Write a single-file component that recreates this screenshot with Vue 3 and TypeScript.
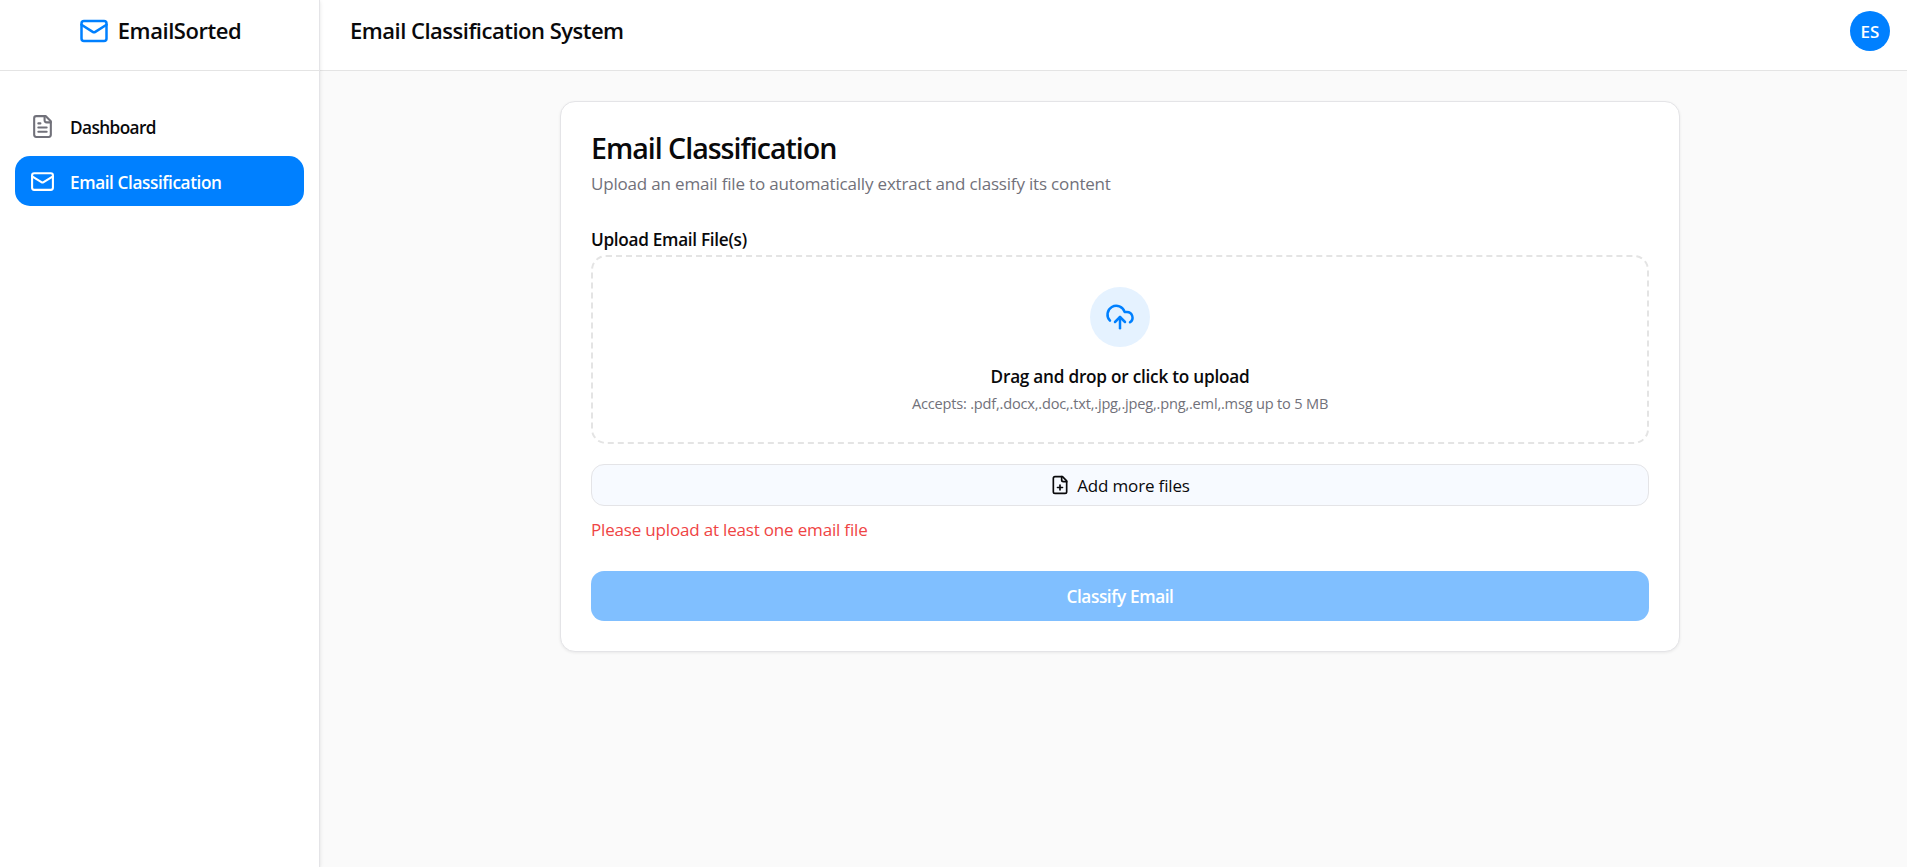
<script setup lang="ts">
interface NavItem {
  label: string
  icon: 'file' | 'mail'
  active: boolean
}

const navItems: NavItem[] = [
  { label: 'Dashboard', icon: 'file', active: false },
  { label: 'Email Classification', icon: 'mail', active: true }
]

const extensions = ['.pdf', '.docx', '.doc', '.txt', '.jpg', '.jpeg', '.png', '.eml', '.msg']
const maxSizeMb = 5
</script>

<template>
  <div class="app">
    <aside class="sidebar">
      <div class="brand">
        <svg class="icon brand-icon" viewBox="0 0 24 24">
          <rect width="20" height="16" x="2" y="4" rx="2" />
          <path d="m22 7-8.97 5.7a1.94 1.94 0 0 1-2.06 0L2 7" />
        </svg>
        <span class="brand-name">EmailSorted</span>
      </div>
      <nav class="nav">
        <a v-for="item in navItems" :key="item.label" class="nav-item" :class="[item.icon, { active: item.active }]">
          <svg v-if="item.icon === 'file'" class="icon nav-icon" viewBox="0 0 24 24">
            <path d="M15 2H6a2 2 0 0 0-2 2v16a2 2 0 0 0 2 2h12a2 2 0 0 0 2-2V7Z" />
            <path d="M14 2v4a2 2 0 0 0 2 2h4" />
            <path d="M10 9H8" />
            <path d="M16 13H8" />
            <path d="M16 17H8" />
          </svg>
          <svg v-else class="icon nav-icon" viewBox="0 0 24 24">
            <rect width="20" height="16" x="2" y="4" rx="2" />
            <path d="m22 7-8.97 5.7a1.94 1.94 0 0 1-2.06 0L2 7" />
          </svg>
          <span>{{ item.label }}</span>
        </a>
      </nav>
    </aside>

    <div class="main">
      <header class="header">
        <h1 class="header-title">Email Classification System</h1>
        <div class="avatar">ES</div>
      </header>

      <main class="content">
        <section class="card">
          <h2 class="card-title">Email Classification</h2>
          <p class="card-desc">Upload an email file to automatically extract and classify its content</p>

          <label class="field-label">Upload Email File(s)</label>
          <div class="dropzone">
            <div class="drop-icon">
              <svg class="icon" viewBox="0 0 24 24">
                <path d="M4 14.899A7 7 0 1 1 15.71 8h1.79a4.5 4.5 0 0 1 2.5 8.242" />
                <path d="M12 12v9" />
                <path d="m16 16-4-4-4 4" />
              </svg>
            </div>
            <p class="drop-title">Drag and drop or click to upload</p>
            <p class="drop-hint">Accepts: {{ extensions.join(',') }} up to {{ maxSizeMb }} MB</p>
          </div>

          <button class="add-btn" type="button">
            <svg class="icon" viewBox="0 0 24 24">
              <path d="M15 2H6a2 2 0 0 0-2 2v16a2 2 0 0 0 2 2h12a2 2 0 0 0 2-2V7Z" />
              <path d="M14 2v4a2 2 0 0 0 2 2h4" />
              <path d="M9 15h6" />
              <path d="M12 18v-6" />
            </svg>
            <span>Add more files</span>
          </button>
          <p class="error">Please upload at least one email file</p>

          <button class="submit-btn" type="button" disabled>Classify Email</button>
        </section>
      </main>
    </div>
  </div>
</template>

<style>
body {
  margin: 0;
  overflow: hidden;
}
</style>

<style scoped>
.app {
  display: flex;
  height: 867px;
  overflow: hidden;
  background: #fafafa;
  color: #09090b;
  font-family: 'Open Sans', 'Noto Sans', sans-serif;
  font-size: 17px;
}

.app * {
  box-sizing: border-box;
}

h1,
h2,
p {
  margin: 0;
}

.icon {
  flex: none;
  fill: none;
  stroke: currentColor;
  stroke-width: 2;
  stroke-linecap: round;
  stroke-linejoin: round;
}

.sidebar {
  position: relative;
  z-index: 1;
  flex: none;
  width: 320px;
  background: #fff;
  border-right: 1px solid #e4e4e7;
  box-shadow: 0 1px 4px rgba(0, 0, 0, 0.1), 0 1px 2px -1px rgba(0, 0, 0, 0.1);
}

.brand {
  display: flex;
  align-items: center;
  justify-content: center;
  gap: 9px;
  height: 71px;
  padding: 0 0 8px 1px;
  border-bottom: 1px solid #e4e4e4;
}

.brand-icon {
  width: 30px;
  height: 30px;
  color: #0080ff;
}

.brand-name {
  padding-bottom: 2px;
  font-size: 22px;
  font-weight: 600;
  line-height: 30px;
  letter-spacing: -0.45px;
}

.nav {
  display: flex;
  flex-direction: column;
  gap: 5px;
  padding: 30px 15px;
}

.nav-item {
  display: flex;
  align-items: center;
  gap: 15px;
  height: 50px;
  padding: 0 15px;
  border-radius: 15px;
  font-size: 17.2px;
  font-weight: 600;
  letter-spacing: -0.41px;
}

.nav-item.file {
  letter-spacing: -0.58px;
}

.nav-item span {
  padding-top: 3px;
}

.nav-icon {
  width: 25px;
  height: 25px;
  color: #71717a;
}

.nav-item.active {
  background: #0080ff;
  color: #fff;
}

.active .nav-icon {
  color: #fff;
}

/* Content column keeps its full desktop width beside the sidebar. */
.main {
  flex: none;
  width: 1600px;
}

.header {
  display: flex;
  align-items: center;
  justify-content: space-between;
  height: 71px;
  padding: 0 30px 8px;
  background: #fff;
  border-bottom: 1px solid #e4e4e4;
}

.header-title {
  padding-bottom: 2px;
  font-size: 22px;
  font-weight: 600;
  line-height: 30px;
  letter-spacing: -0.5px;
}

.avatar {
  display: flex;
  align-items: center;
  justify-content: center;
  width: 40px;
  height: 40px;
  border-radius: 50%;
  background: #0080ff;
  color: #fff;
  font-size: 17px;
  font-weight: 600;
}

.content {
  display: flex;
  justify-content: center;
  padding: 30px;
}

.card {
  display: flex;
  flex-direction: column;
  width: 1120px;
  height: 551px;
  padding: 30px;
  background: #fff;
  border: 1px solid #e4e4e7;
  border-radius: 15px;
  box-shadow: 0 1px 3px rgba(0, 0, 0, 0.07);
}

.card-title {
  margin-top: 1px;
  font-size: 28.6px;
  font-weight: 600;
  line-height: 30px;
  letter-spacing: -1.02px;
}

.card-desc {
  margin-top: 8px;
  color: #71717a;
  line-height: 25px;
  letter-spacing: -0.18px;
}

.field-label {
  margin-top: 31px;
  font-size: 17.2px;
  font-weight: 600;
  line-height: 25px;
  letter-spacing: -0.3px;
}

.dropzone {
  display: flex;
  flex-direction: column;
  align-items: center;
  height: 189px;
  margin-top: 3px;
  padding-top: 30px;
  border: 2px dashed #e4e4e4;
  border-radius: 15px;
}

.drop-icon {
  display: flex;
  align-items: center;
  justify-content: center;
  width: 60px;
  height: 60px;
  border-radius: 50%;
  background: #e5f2ff;
  color: #0080ff;
}

.drop-icon .icon {
  width: 30px;
  height: 30px;
}

.drop-title {
  margin-top: 17px;
  font-size: 17.2px;
  font-weight: 600;
  line-height: 25px;
  letter-spacing: -0.24px;
}

.drop-hint {
  margin-top: 4px;
  color: #71717a;
  font-size: 14.6px;
  line-height: 20px;
  letter-spacing: -0.2px;
}

.add-btn {
  display: flex;
  align-items: center;
  justify-content: center;
  gap: 7px;
  height: 42px;
  margin-top: 20px;
  padding: 0;
  border: 1px solid #e4e4e7;
  border-radius: 13px;
  background: #f7faff;
  color: #09090b;
  font: inherit;
  letter-spacing: -0.16px;
}

.add-btn .icon {
  width: 20px;
  height: 20px;
}

.error {
  margin-top: 11px;
  color: #ef4444;
  line-height: 25px;
  letter-spacing: -0.18px;
}

.submit-btn {
  height: 50px;
  margin-top: 29px;
  padding: 1px 0 0;
  border: 0;
  border-radius: 13px;
  background: #80bfff;
  color: #fff;
  font: inherit;
  font-size: 17.2px;
  font-weight: 600;
  letter-spacing: -0.4px;
}
</style>
